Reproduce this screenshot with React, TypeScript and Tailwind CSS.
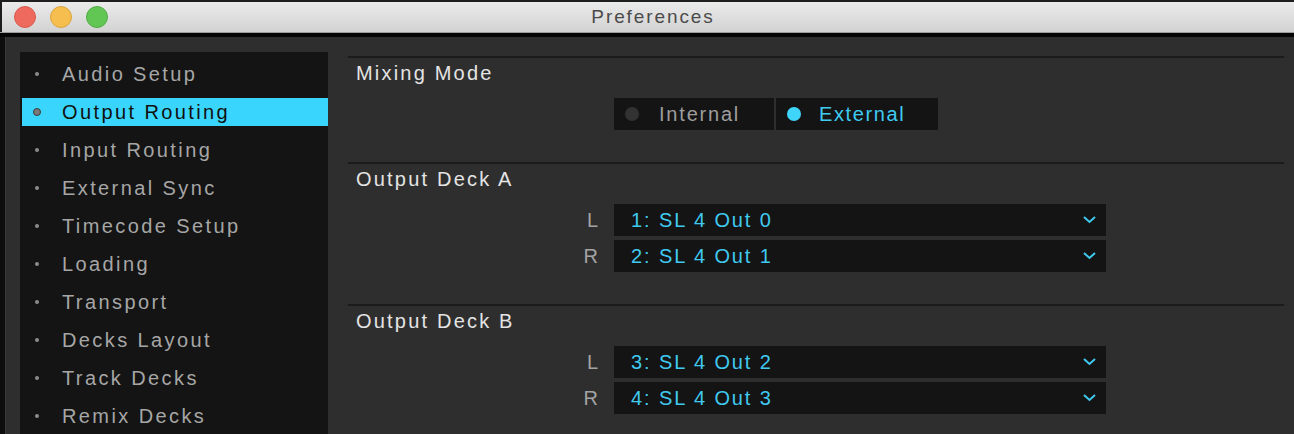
import React from "react";

const font = { fontFamily: '"Liberation Sans", Arial, sans-serif' };

const sidebarItems = [
  "Audio Setup",
  "Output Routing",
  "Input Routing",
  "External Sync",
  "Timecode Setup",
  "Loading",
  "Transport",
  "Decks Layout",
  "Track Decks",
  "Remix Decks",
];

function Chevron() {
  return (
    <svg width="13" height="8" viewBox="0 0 13 8" className="shrink-0">
      <polyline points="1,1 6.5,6 12,1" fill="none" stroke="#3fc9ef" strokeWidth="2" />
    </svg>
  );
}

function Dropdown({ label, value }: { label: string; value: string }) {
  return (
    <div className="flex items-center">
      <div className="w-[266px] pr-[14px] text-right text-[20px] leading-[20px] tracking-[2px] text-[#a3a3a3]">
        {label}
      </div>
      <div className="w-[492px] h-[32px] bg-[#141414] flex items-center justify-between pl-[17px] pr-[10px]">
        <span className="text-[20px] leading-[20px] tracking-[1.9px] text-[#40c9ef]">{value}</span>
        <Chevron />
      </div>
    </div>
  );
}

function Section({ title, children }: { title: string; children: React.ReactNode }) {
  return (
    <div className="flex flex-col">
      <div className="h-[2px] bg-[#1b1b1b]" />
      <div className="h-[40px] pt-[5px] pl-[8px] text-[20px] leading-[20px] tracking-[2.2px] text-[#e4e4e4]">
        {title}
      </div>
      {children}
      <div className="h-[32px]" />
    </div>
  );
}

export default function App() {
  return (
    <div className="w-[1294px] h-[434px] overflow-hidden bg-[#1c1c1c] flex flex-col" style={font}>
      <div className="h-[2px] bg-[#1e1e1e] shrink-0" />
      <div className="h-[30px] ml-[2px] shrink-0 bg-gradient-to-b from-[#ebebeb] to-[#d2d2d2] flex items-center relative">
        <div className="flex items-center gap-[14px] pl-[12px]">
          <div className="w-[22px] h-[22px] rounded-full bg-[#ee6a5f] border border-[#d9594e]" />
          <div className="w-[22px] h-[22px] rounded-full bg-[#f5be4f] border border-[#dca53b]" />
          <div className="w-[22px] h-[22px] rounded-full bg-[#62c655] border border-[#50ad44]" />
        </div>
        <div className="absolute inset-0 flex items-center justify-center pl-[10px]">
          <span className="text-[19px] tracking-[1.9px] text-[#4b4b4b]">Preferences</span>
        </div>
      </div>
      <div className="h-[1px] bg-[#9c9c9c] shrink-0" />
      <div className="h-[4px] bg-[#050505] shrink-0" />
      <div className="flex flex-1 min-h-0">
        <div className="w-[5px] bg-[#0d0d0d] shrink-0" />
        <div className="w-[1px] bg-[#3a3a3a] shrink-0" />
        <div className="flex-1 bg-[#2e2e2e] flex pl-[14px] pt-[15px] pr-[10px] gap-[20px]">
          <div className="w-[308px] bg-[#141414] pt-[8px] pl-[2px] flex flex-col gap-[10px] shrink-0">
            {sidebarItems.map((item, i) => {
              const active = i === 1;
              return (
                <div
                  key={item}
                  className={
                    "h-[28px] flex items-center shrink-0 " + (active ? "bg-[#3ad5fc]" : "")
                  }
                >
                  <div className="w-[40px] flex items-center justify-start pl-[11px]">
                    {active ? (
                      <div className="w-[8px] h-[8px] rounded-full bg-[#7a7a7a] border border-[#3a3a3a]" />
                    ) : (
                      <div className="ml-[2px] w-[4px] h-[4px] rounded-full bg-[#8c8c8c]" />
                    )}
                  </div>
                  <span
                    className={
                      "text-[20px] leading-[20px] tracking-[2.4px] " +
                      (active ? "text-[#101010]" : "text-[#a6a6a6]")
                    }
                  >
                    {item}
                  </span>
                </div>
              );
            })}
          </div>
          <div className="flex-1 pt-[4px] flex flex-col">
            <Section title="Mixing Mode">
              <div className="flex pl-[266px] gap-[2px]">
                <div className="w-[160px] h-[32px] bg-[#141414] flex items-center pl-[11px]">
                  <div className="w-[14px] h-[14px] rounded-full bg-[#323232]" />
                  <span className="ml-[20px] text-[20px] leading-[20px] tracking-[1.8px] text-[#9e9e9e]">
                    Internal
                  </span>
                </div>
                <div className="w-[162px] h-[32px] bg-[#141414] flex items-center pl-[11px]">
                  <div className="w-[14px] h-[14px] rounded-full bg-[#3fd5fb]" />
                  <span className="ml-[18px] text-[20px] leading-[20px] tracking-[1.6px] text-[#3fcbf2]">
                    External
                  </span>
                </div>
              </div>
            </Section>
            <Section title="Output Deck A">
              <div className="flex flex-col gap-[4px]">
                <Dropdown label="L" value="1: SL 4 Out 0" />
                <Dropdown label="R" value="2: SL 4 Out 1" />
              </div>
            </Section>
            <Section title="Output Deck B">
              <div className="flex flex-col gap-[4px]">
                <Dropdown label="L" value="3: SL 4 Out 2" />
                <Dropdown label="R" value="4: SL 4 Out 3" />
              </div>
            </Section>
          </div>
        </div>
      </div>
    </div>
  );
}
